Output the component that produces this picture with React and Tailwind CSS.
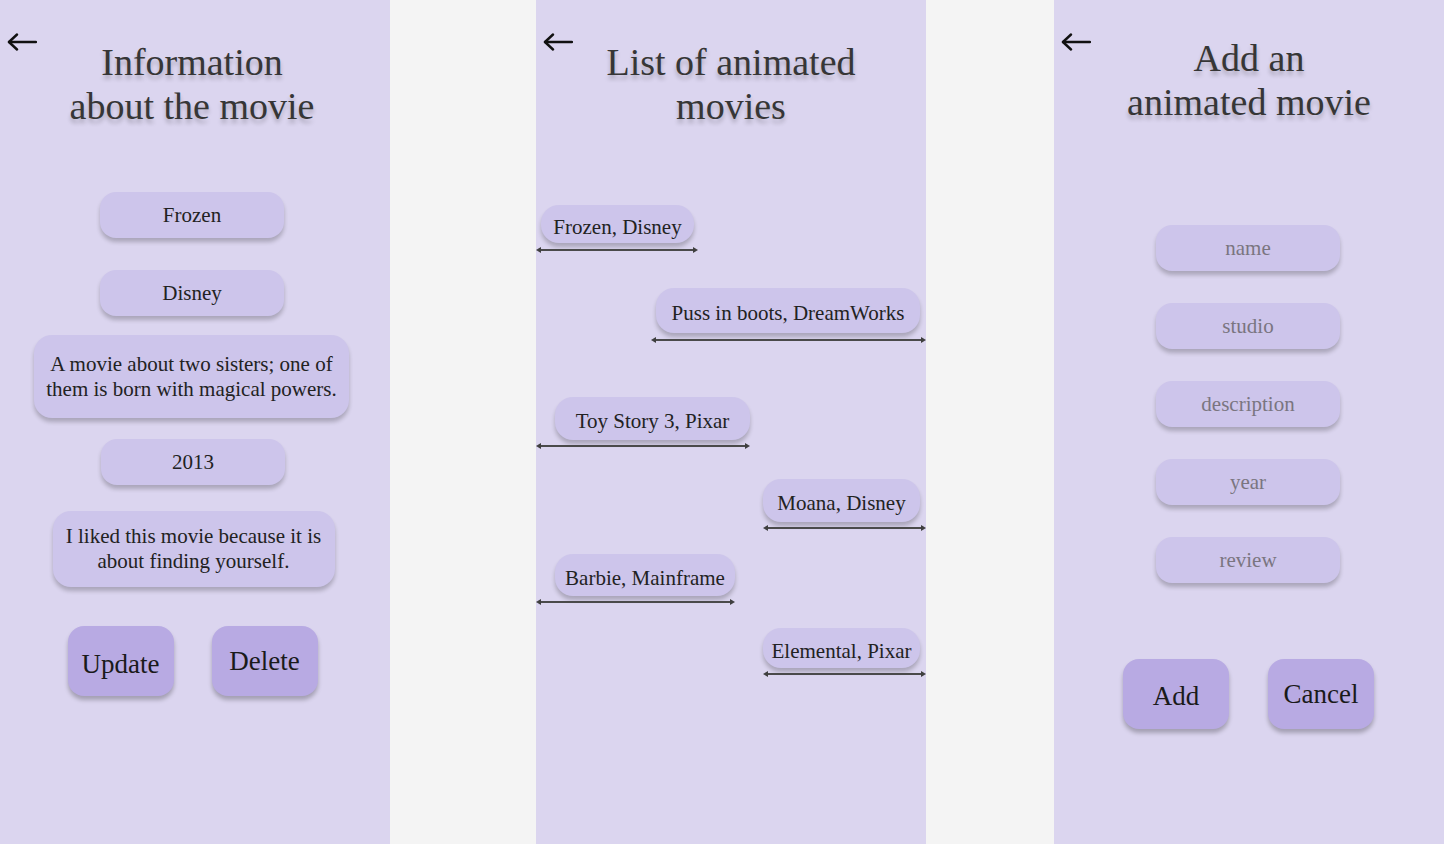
import React from "react";

const serif = { fontFamily: '"Liberation Serif", "DejaVu Serif", serif' };

function BackArrow() {
  return (
    <svg width="30" height="18" viewBox="0 0 30 18" fill="none" stroke="#111" strokeWidth="2.4" strokeLinecap="round" strokeLinejoin="round">
      <path d="M29 9 H2" />
      <path d="M10 1.5 L2 9 L10 16.5" />
    </svg>
  );
}

function Header({ lines, titleClass }) {
  return (
    <div className="grid grid-cols-[1fr_auto_1fr] pt-[33px] px-[7px]">
      <div className="justify-self-start">
        <BackArrow />
      </div>
      <h1
        className={`${titleClass} text-center text-[38px] leading-[44px] text-[#363636] [text-shadow:0_4px_4px_rgba(0,0,0,0.22)]`}
      >
        {lines.map((l, i) => (
          <div key={i}>{l}</div>
        ))}
      </h1>
      <div />
    </div>
  );
}

function Pill({ children, className = "", muted = false }) {
  return (
    <div
      className={`flex items-center justify-center text-center bg-[#cdc5eb] rounded-[16px] shadow-[0_4px_4px_rgba(0,0,0,0.22)] text-[21px] leading-[25px] ${
        muted ? "text-[#7a7580]" : "text-[#222]"
      } ${className}`}
    >
      {children}
    </div>
  );
}

function Btn({ children, className = "" }) {
  return (
    <div
      className={`flex items-center justify-center w-[106px] h-[70px] bg-[#b8aae3] rounded-[16px] shadow-[0_4px_4px_rgba(0,0,0,0.25)] text-[27px] text-[#1a1a1a] ${className}`}
    >
      {children}
    </div>
  );
}

function ArrowLine() {
  return (
    <div className="flex items-center h-[6px] w-full">
      <svg width="5" height="6" viewBox="0 0 5 6" className="shrink-0">
        <path d="M0 3 L5 0 L5 6 Z" fill="#3f3f3f" />
      </svg>
      <div className="flex-1 h-[2px] bg-[#4a4a4a]" />
      <svg width="5" height="6" viewBox="0 0 5 6" className="shrink-0">
        <path d="M5 3 L0 0 L0 6 Z" fill="#3f3f3f" />
      </svg>
    </div>
  );
}

function Item({ text, lineW, pillW, pillH, pillMl, gap, side, mt }) {
  return (
    <div className={`flex flex-col ${mt} ${side === "left" ? "self-start" : "self-end"}`} style={{ width: lineW }}>
      <div style={{ marginLeft: pillMl, width: pillW, height: pillH, marginBottom: gap }}>
        <Pill className="w-full h-full rounded-[18px] whitespace-nowrap pt-[6px]">{text}</Pill>
      </div>
      <ArrowLine />
    </div>
  );
}

export default function App() {
  return (
    <div className="flex w-[1444px] h-[844px] bg-[#f4f4f4] overflow-hidden" style={serif}>
      {/* Panel 1 */}
      <div className="w-[390px] h-full bg-[#dbd5ef] flex flex-col">
        <Header lines={["Information", "about the movie"]} titleClass="mt-[7px] mr-[6px]" />
        <div className="flex flex-col items-center">
          <Pill className="w-[184px] h-[46px] mt-[64px] ml-[-6px]">Frozen</Pill>
          <Pill className="w-[184px] h-[46px] mt-[32px] ml-[-6px]">Disney</Pill>
          <Pill className="w-[315px] h-[83px] mt-[19px] ml-[-7px] rounded-[18px]">
            A movie about two sisters; one of
            <br />
            them is born with magical powers.
          </Pill>
          <Pill className="w-[184px] h-[46px] mt-[21px] ml-[-4px]">2013</Pill>
          <Pill className="w-[282px] h-[76px] mt-[26px] ml-[-3px] rounded-[18px]">
            I liked this movie because it is
            <br />
            about finding yourself.
          </Pill>
          <div className="flex gap-[38px] mt-[39px] ml-[-5px]">
            <Btn><span className="mt-[6px]">Update</span></Btn>
            <Btn>Delete</Btn>
          </div>
        </div>
      </div>

      {/* Panel 2 */}
      <div className="w-[390px] h-full bg-[#dbd5ef] ml-[146px] flex flex-col">
        <Header lines={["List of animated", "movies"]} titleClass="mt-[7px]" />
        <div className="flex flex-col">
          <Item text="Frozen, Disney" side="left" lineW={162} pillW={153} pillH={38} pillMl={5} gap={4} mt="mt-[77px]" />
          <Item text="Puss in boots, DreamWorks" side="right" lineW={275} pillW={264} pillH={45} pillMl={5} gap={4} mt="mt-[35px]" />
          <Item text="Toy Story 3, Pixar" side="left" lineW={214} pillW={195} pillH={43} pillMl={19} gap={3} mt="mt-[54px]" />
          <Item text="Moana, Disney" side="right" lineW={163} pillW={157} pillH={43} pillMl={0} gap={3} mt="mt-[30px]" />
          <Item text="Barbie, Mainframe" side="left" lineW={199} pillW={180} pillH={42} pillMl={19} gap={3} mt="mt-[23px]" />
          <Item text="Elemental, Pixar" side="right" lineW={163} pillW={157} pillH={40} pillMl={0} gap={3} mt="mt-[23px]" />
        </div>
      </div>

      {/* Panel 3 */}
      <div className="w-[390px] h-full bg-[#dbd5ef] ml-[128px] flex flex-col">
        <Header lines={["Add an", "animated movie"]} titleClass="mt-[3px]" />
        <div className="flex flex-col items-center">
          {["name", "studio", "description", "year", "review"].map((p, i) => (
            <Pill key={p} muted className={`w-[184px] h-[46px] ml-[-2px] ${i === 0 ? "mt-[101px]" : "mt-[32px]"}`}>
              {p}
            </Pill>
          ))}
          <div className="flex gap-[39px] mt-[76px] ml-[-1px]">
            <Btn><span className="mt-[4px]">Add</span></Btn>
            <Btn>Cancel</Btn>
          </div>
        </div>
      </div>
    </div>
  );
}
